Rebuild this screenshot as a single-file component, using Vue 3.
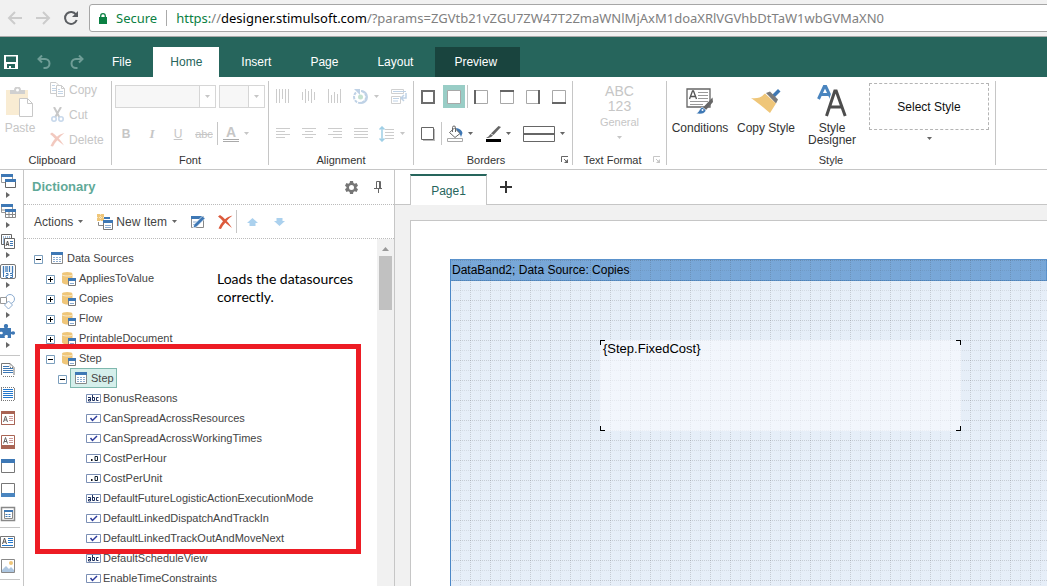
<script setup>
import { ref } from 'vue'

const tabs = ['File', 'Home', 'Insert', 'Page', 'Layout', 'Preview']
const activeTab = ref('Home')

const clipboard = [
  { icon: 'copy', label: 'Copy' },
  { icon: 'cut', label: 'Cut' },
  { icon: 'cross', label: 'Delete' }
]
const alignTop = ['valign-top', 'valign-mid', 'valign-bottom']
const alignBottom = ['left', 'center', 'right', 'justify']
const edges = ['edge-left', 'edge-top', 'edge-right', 'edge-bottom']

const bandGroups = ['windows', 'tables', 'report', 'barcode', 'shapes', 'puzzle']
const bandTools = ['page-header', 'page-body', 'title-top', 'title-bottom', 'band-top', 'band-bottom', 'data-band']
const componentTools = ['text', 'image']

const tree = [
  { level: 0, icon: 'table', label: 'Data Sources', toggle: 'minus' },
  { level: 1, icon: 'database', label: 'AppliesToValue', toggle: 'plus' },
  { level: 1, icon: 'database', label: 'Copies', toggle: 'plus' },
  { level: 1, icon: 'database', label: 'Flow', toggle: 'plus' },
  { level: 1, icon: 'database', label: 'PrintableDocument', toggle: 'plus' },
  { level: 1, icon: 'database', label: 'Step', toggle: 'minus' },
  { level: 2, icon: 'table', label: 'Step', toggle: 'minus', selected: true },
  { level: 3, icon: 'string', label: 'BonusReasons' },
  { level: 3, icon: 'bool', label: 'CanSpreadAcrossResources' },
  { level: 3, icon: 'bool', label: 'CanSpreadAcrossWorkingTimes' },
  { level: 3, icon: 'number', label: 'CostPerHour' },
  { level: 3, icon: 'number', label: 'CostPerUnit' },
  { level: 3, icon: 'string', label: 'DefaultFutureLogisticActionExecutionMode' },
  { level: 3, icon: 'bool', label: 'DefaultLinkedDispatchAndTrackIn' },
  { level: 3, icon: 'bool', label: 'DefaultLinkedTrackOutAndMoveNext' },
  { level: 3, icon: 'string', label: 'DefaultScheduleView' },
  { level: 3, icon: 'bool', label: 'EnableTimeConstraints' }
]
</script>

<template>
  <svg class="sprite" aria-hidden="true">
    <defs>
      <symbol id="caret" viewBox="0 0 5 3"><path d="M0 0h5L2.500 3z" fill="currentColor" /></symbol>
      <symbol id="caret-right" viewBox="0 0 4 6"><path d="M0 0l4 3-4 3z" fill="#666" /></symbol>
      <symbol id="launcher" viewBox="0 0 8 8">
        <path d="M.5 6V.5H7M3 3l3 3" fill="none" stroke="currentColor" /><path d="M7 3v4H3z" fill="currentColor" />
      </symbol>

      <symbol id="nav-back" viewBox="0 0 16 16"><path d="M15 8H2M8 2L2 8l6 6" fill="none" stroke="#ccc" stroke-width="2" /></symbol>
      <symbol id="nav-forward" viewBox="0 0 16 16"><path d="M1 8h13M8 2l6 6-6 6" fill="none" stroke="#ccc" stroke-width="2" /></symbol>
      <symbol id="reload" viewBox="0 0 16 16">
        <path d="M13 4.500A6 6 0 1 0 13.700 10" fill="none" stroke="#5a5d61" stroke-width="2" /><path d="M15 1v6H9z" fill="#5a5d61" />
      </symbol>
      <symbol id="lock" viewBox="0 0 8 11">
        <rect y="4" width="8" height="7" fill="#0b8043" /><path d="M1.700 5V3a2.300 2.300 0 0 1 4.600 0v2" fill="none" stroke="#0b8043" stroke-width="1.300" />
      </symbol>

      <symbol id="save" viewBox="0 0 14 14">
        <path d="M0 0h14v14H0zM2 1.500V7h10V1.500zM3 9v4h2v-2h2v2h4V9z" fill="#fff" fill-rule="evenodd" />
      </symbol>
      <symbol id="undo" viewBox="0 0 14 14">
        <path d="M5 .5L1.500 4 5 7.500M2 4h6a4.500 4.500 0 0 1 0 9H6.500" fill="none" stroke="#6f9d96" stroke-width="2" />
      </symbol>
      <symbol id="redo" viewBox="0 0 14 14">
        <path d="M9 .5L12.500 4 9 7.500M12 4H6a4.500 4.500 0 0 0 0 9h1.500" fill="none" stroke="#6f9d96" stroke-width="2" />
      </symbol>

      <symbol id="paste" viewBox="0 0 28 30">
        <path d="M0 3h22v25H0z" fill="#f9ecd3" />
        <path d="M4 7V3h4a3.500 3.500 0 0 1 7 0h4v4z" fill="#d0d0d0" /><circle cx="11.500" cy="3" r="1.500" fill="#fff" />
        <path d="M13.500 11.500h8l5 5v13h-13z" fill="#fff" stroke="#c8c8c8" /><path d="M21.500 11.500v5h5" fill="none" stroke="#c8c8c8" />
      </symbol>
      <symbol id="copy" viewBox="0 0 15 15">
        <path d="M.5.5H6L9.500 4v7.500h-9z" fill="#fff" stroke="#ccc" /><path d="M2 3.500h3M2 6.500h4M2 8.500h4" stroke="#c3d4e6" />
        <path d="M6.500 3.500h5l3 3v8h-8z" fill="#fff" stroke="#ccc" /><path d="M11.500 3.500v3h3" fill="none" stroke="#ccc" />
        <path d="M8 7.500h2M8 9.500h5M8 11.500h5" stroke="#c3d4e6" />
      </symbol>
      <symbol id="cut" viewBox="0 0 15 15">
        <path d="M4 0L9.500 10.500M11 0L5 10.500" stroke="#c8c8c8" stroke-width="2" />
        <circle cx="4" cy="12" r="2.200" fill="none" stroke="#c7d8eb" stroke-width="1.600" />
        <circle cx="11" cy="12" r="2.200" fill="none" stroke="#c7d8eb" stroke-width="1.600" />
      </symbol>
      <symbol id="cross" viewBox="0 0 15 14">
        <path d="M0 1.500L2 0c2 1.300 3.600 2.700 5 4.200C9 2.500 11 1.300 14.500.5 12 2.500 10 4.200 8.700 6c2 2.200 3.500 4 5.300 7-2.500-2-4.700-3.600-6.700-5.200C5.500 9.800 4 12 3 14l-2.500-.5C1.500 11 3 8.500 5 6.200 3.500 4.600 2 3 0 1.500z" fill="currentColor" />
      </symbol>

      <symbol id="valign-top" viewBox="0 0 14 15"><path d="M.5 0v14M3.500 0v14M6.500 0v10M9.500 0v14M12.500 0v14" stroke="#ccc" /></symbol>
      <symbol id="valign-mid" viewBox="0 0 14 15"><path d="M.5 3v8M3.500 0v14M6.500 2v10M9.500 0v14M12.500 3v8" stroke="#ccc" /></symbol>
      <symbol id="valign-bottom" viewBox="0 0 14 15"><path d="M.5 0v14M3.500 6v8M6.500 3v11M9.500 5v9M12.500 0v14" stroke="#ccc" /></symbol>
      <symbol id="rotate" viewBox="0 0 15 15">
        <path d="M3 3.500A6 6 0 1 0 8 2" fill="none" stroke="#bfd2e6" stroke-width="2" stroke-dasharray="3 1" />
        <path d="M8 2a6 6 0 0 1 0 12" fill="none" stroke="#bfd2e6" stroke-width="2" />
        <path d="M1 0h6v6z" fill="#bfd2e6" /><circle cx="7.500" cy="8" r="2.500" fill="#c5e2d0" />
      </symbol>
      <symbol id="wrap" viewBox="0 0 16 15">
        <path d="M.5.5h12v4H.5zM.5 7.500h9v7H.5z" fill="none" stroke="#d0d0d0" /><path d="M2 2.500h13M2 9.500h6M2 12h5" stroke="#bfd2e6" />
        <path d="M15 4v5h-4m2-3l-3 3 3 3" fill="none" stroke="#bfd2e6" stroke-width="1.500" />
      </symbol>
      <symbol id="left" viewBox="0 0 14 11"><path d="M0 .5h14M0 3.500h9M0 6.500h14M0 9.500h9" stroke="#ccc" /></symbol>
      <symbol id="center" viewBox="0 0 14 11"><path d="M0 .5h14M3 3.500h8M0 6.500h14M3 9.500h8" stroke="#ccc" /></symbol>
      <symbol id="right" viewBox="0 0 14 11"><path d="M0 .5h14M5 3.500h9M0 6.500h14M5 9.500h9" stroke="#ccc" /></symbol>
      <symbol id="justify" viewBox="0 0 14 11"><path d="M0 .5h14M0 3.500h14M0 6.500h14M0 9.500h14" stroke="#ccc" /></symbol>
      <symbol id="line-height" viewBox="0 0 15 16">
        <path d="M3 1v14M.5 3.500L3 1l2.500 2.500M.5 12.500L3 15l2.500-2.500" fill="none" stroke="#9fcfe6" stroke-width="1.500" />
        <path d="M6 3.500h9M6 6.500h9M6 9.500h9M6 12.500h9" stroke="#ccc" />
      </symbol>

      <symbol id="border-all" viewBox="0 0 14 14"><path d="M1 1h12v12H1z" fill="#fff" stroke="#6d6d6d" stroke-width="2" /></symbol>
      <symbol id="border-none" viewBox="0 0 14 14"><path d="M.5.5h13v13H.5z" fill="#fff" stroke="#a8a8a8" /></symbol>
      <symbol id="edge-left" viewBox="0 0 14 14"><path d="M.5.5h13v13H.5z" fill="#fff" stroke="#a8a8a8" /><path d="M1 0v14" stroke="#666" stroke-width="2" /></symbol>
      <symbol id="edge-top" viewBox="0 0 14 14"><path d="M.5.5h13v13H.5z" fill="#fff" stroke="#a8a8a8" /><path d="M0 1h14" stroke="#666" stroke-width="2" /></symbol>
      <symbol id="edge-right" viewBox="0 0 14 14"><path d="M.5.5h13v13H.5z" fill="#fff" stroke="#a8a8a8" /><path d="M13 0v14" stroke="#666" stroke-width="2" /></symbol>
      <symbol id="edge-bottom" viewBox="0 0 14 14"><path d="M.5.5h13v13H.5z" fill="#fff" stroke="#a8a8a8" /><path d="M0 13h14" stroke="#666" stroke-width="2" /></symbol>
      <symbol id="shadow" viewBox="0 0 14 14"><path d="M2 2h12v12H2z" fill="#bbb" /><path d="M.5.5h12v12H.5z" fill="#fff" stroke="#666" /></symbol>
      <symbol id="bucket" viewBox="0 0 17 17">
        <path d="M9 3c3 .5 6 2 6.500 5L14 12c-1-3-2-4-4-5z" fill="#3e78b5" />
        <path d="M7.500 3L13 8.500l-5 4-5.500-5z" fill="#fff" stroke="#666" /><path d="M5.500 7V2.500a1.500 1.500 0 0 1 3 0V7" fill="none" stroke="#666" />
        <path d="M.5 13.500h15v3H.5z" fill="#fff" stroke="#a8a8a8" />
      </symbol>
      <symbol id="pen" viewBox="0 0 17 16">
        <path d="M13.500 0L16 1 8.500 9 6 7.500z" fill="#666" /><path d="M5.500 8L8 9.500C6 11.500 4 12 1 12c2-1 3-2 4.500-4z" fill="#666" /><path d="M1 13h15v3H1z" fill="#000" />
      </symbol>
      <symbol id="line-style" viewBox="0 0 32 16"><path d="M.5.5h31v15H.5z" fill="#fff" stroke="#666" /><path d="M0 8h32" stroke="#666" stroke-width="2" /></symbol>

      <symbol id="conditions" viewBox="0 0 28 28">
        <path d="M1 2h23v18H1z" fill="#fff" stroke="#666" stroke-width="1.300" />
        <path d="M3.500 12L6.500 4h1l3 8M5 9.500h4" fill="none" stroke="#555" stroke-width="1.300" />
        <path d="M12 5.500h10M12 8.500h10M12 11.500h10M4 14.500h18M4 17.500h13" stroke="#999" />
        <path d="M26.500 10.500L27 15l-7 8-3-2.500z" fill="#666" /><path d="M16 20l4 3c-1 4-5 4.500-10 3.500 3-1 3-4 6-6.500z" fill="#3e78b5" stroke="#fff" stroke-width=".5" />
        <circle cx="16.500" cy="23" r="1" fill="#fff" />
      </symbol>
      <symbol id="broom" viewBox="0 0 30 26">
        <path d="M21 7l6-6 2.500 2.500-6 6z" fill="#3e78b5" /><path d="M15 5l4-1.500 8 8-2 4z" fill="#7b7b7b" />
        <path d="M14 5.500l11 10L19 25C13 20 6 14 0 10c6 1 10-.5 14-4.500z" fill="#efc679" />
      </symbol>
      <symbol id="style-designer" viewBox="0 0 30 32">
        <path d="M1.500 14L7.500 1h1l6 13M4 9.500h8" fill="none" stroke="#4a85bf" stroke-width="3" />
        <path d="M9.500 31L17.500 6h2l9 25M12.500 22h13" fill="none" stroke="#fff" stroke-width="5" />
        <path d="M9.500 31L17.800 6h1.400l9 25M12.500 22h12.500" fill="none" stroke="#4d4d4d" stroke-width="3" />
      </symbol>

      <symbol id="windows" viewBox="-1 0 16 16">
        <path d="M.5.500h11v8H.5z" fill="#fff" stroke="#999" /><path d="M0 0h12v3H0z" fill="#3e78b5" />
        <path d="M4.500 5.500h10v8h-10z" fill="#fff" stroke="#666" /><path d="M4 5h11v3H4z" fill="#3e78b5" />
      </symbol>
      <symbol id="tables" viewBox="-1 0 16 16">
        <path d="M.5.500h11v8H.5z" fill="#fff" stroke="#999" /><path d="M0 0h12v3H0z" fill="#3e78b5" />
        <path d="M4.500 5.500h10v8h-10zM4 10.500h10M8 8v6M11.500 8v6M0 6h4" fill="#fff" stroke="#888" /><path d="M4 5h11v3H4z" fill="#3e78b5" />
      </symbol>
      <symbol id="report" viewBox="0 0 16 16">
        <path d="M1.500.500h10v10h-10z" fill="#fff" stroke="#666" /><path d="M3 3h7M3 5h7M3 7h7M3 9h7" stroke="#3e78b5" stroke-dasharray="1 1" />
        <path d="M4.500 4.500h10v10h-10z" fill="#fff" stroke="#666" /><path d="M6 12l1.500-5L9 12M6.500 10.500h2" fill="none" stroke="#555" />
        <path d="M10 7.500h3M10 9.500h3M10 11.500h3" stroke="#3e78b5" />
      </symbol>
      <symbol id="barcode" viewBox="0 0 16 16">
        <rect x=".5" y=".500" width="15" height="14" rx="1.500" fill="#fff" stroke="#777" />
        <path d="M3.500 2v7M6 2v6M9.500 2v6M12.500 2v7" stroke="#3e78b5" stroke-width="1.300" /><path d="M7.500 2v6" stroke="#3e78b5" stroke-width=".7" />
        <path d="M3.500 9v4M6 9.500h2v2H6v2h2M10 9.500h2.500v2H10.500h2v2H10" fill="none" stroke="#3e78b5" />
      </symbol>
      <symbol id="shapes" viewBox="0 0 16 16">
        <circle cx="10" cy="5" r="4.500" fill="#fff" stroke="#8cacd0" /><path d="M.5 3.500h6v6h-6z" fill="#fff" stroke="#999" /><path d="M8.500 7l4 4-4 4-4-4z" fill="#fff" stroke="#8cacd0" />
      </symbol>
      <symbol id="puzzle" viewBox="0 0 16 16">
        <path d="M0 4h4.500C3 1.500 4.500 0 6 0s3 1.500 1.500 4H11v4c2.500-1.500 4-.5 4 1s-1.500 2.500-4 1v4H7.500c1-2.500 0-3-1.300-3S4 12 5 14H0v-4c2 .8 2.800 0 2.800-1S2 7.200 0 8z" fill="#3e78b5" />
      </symbol>
      <symbol id="page-header" viewBox="0 0 16 16">
        <path d="M1.500 13V1.500H10l4 4V13" fill="#fff" stroke="#777" /><path d="M10 1.500v4h4M3 14.500h12" fill="none" stroke="#777" stroke-dasharray="1 1" />
        <path d="M3 4.500h6M3 6.500h10M3 8.500h10M3 10.500h10" stroke="#3e78b5" />
      </symbol>
      <symbol id="page-body" viewBox="0 0 16 16">
        <path d="M1.500 2v12M14.500 2v12" stroke="#888" /><path d="M1 1.500h14M1 14.500h14" stroke="#777" stroke-dasharray="1 1" />
        <path d="M3 3h10v1H3zM3 5h10v1H3zM3 7h10v1H3zM3 9h10v1H3zM3 11h10v1H3z" fill="#2277cc" />
      </symbol>
      <symbol id="title-top" viewBox="0 0 16 16">
        <path d="M1.500 1.500h13v13h-13z" fill="#fff" stroke="#777" /><path d="M1 1h14v3H1z" fill="#a96454" />
        <path d="M1.500 2v12.500h13V2" fill="none" stroke="#a96454" /><path d="M3.500 12l2-6 2 6M4 10h3" fill="none" stroke="#666" /><path d="M9 6.500h4M9 8.500h4M9 10.500h4" stroke="#c99" />
      </symbol>
      <symbol id="title-bottom" viewBox="0 0 16 16">
        <path d="M1.500 1.500h13v13h-13z" fill="#fff" stroke="#a96454" /><path d="M1 11h14v4H1z" fill="#a96454" />
        <path d="M3.500 9.500l2-6 2 6M4 7.500h3" fill="none" stroke="#666" /><path d="M9 4.500h4M9 6.500h4M9 8.500h4" stroke="#c99" />
      </symbol>
      <symbol id="band-top" viewBox="0 0 16 16"><path d="M1.500 1.500h13v13h-13z" fill="#fff" stroke="#777" /><path d="M1 1h14v4H1z" fill="#3e78b5" /></symbol>
      <symbol id="band-bottom" viewBox="0 0 16 16"><path d="M1.500 1.500h13v13h-13z" fill="#fff" stroke="#777" /><path d="M1 11h14v4H1z" fill="#4a85bf" /></symbol>
      <symbol id="data-band" viewBox="0 0 16 16">
        <path d="M1.500 1.500h13v13h-13z" fill="#fff" stroke="#888" stroke-width="1.500" /><path d="M4.500 4.500h8v8h-8z" fill="#fff" stroke="#888" /><path d="M4 4h9v2H4z" fill="#3e78b5" />
        <path d="M5.500 8.500h6M5.500 10.500h6" stroke="#3e78b5" stroke-dasharray="2 1" />
      </symbol>
      <symbol id="text" viewBox="0 0 16 16">
        <path d="M.5 2.500h14v11H.5z" fill="#fff" stroke="#777" /><path d="M2.500 10l2-6 2 6M3 8h3" fill="none" stroke="#555" />
        <path d="M8 4h5v1H8zM8 6h5v1H8zM8 8h5v1H8zM2 11h11v1H2z" fill="#2277cc" />
      </symbol>
      <symbol id="image" viewBox="0 0 16 16">
        <path d="M1.500 1.500h13v13h-13z" fill="#fff" stroke="#888" /><circle cx="11" cy="5" r="2" fill="#efc679" /><path d="M2 14v-2l4-4 3 3 2-2 3 3v2z" fill="#adc6e0" />
      </symbol>

      <symbol id="gear" viewBox="0 0 13 13">
        <path d="M5 0h3l.4 2 1.300.7 1.900-.7L13 4.700 11.500 6v1L13 8.300 11.600 11l-1.900-.7-1.300.7L8 13H5l-.4-2-1.300-.7-1.900.7L0 8.300 1.500 7V6L0 4.700 1.400 2l1.900.7L4.600 2zM6.500 4a2.500 2.500 0 1 0 0 5 2.500 2.500 0 0 0 0-5z" fill="#767676" fill-rule="evenodd" />
      </symbol>
      <symbol id="pin" viewBox="0 0 9 12"><path d="M2.500 7V.5h4V7M5.500 0v7M0 7.500h8M4.500 8v4" fill="none" stroke="#666" /></symbol>
      <symbol id="new-item" viewBox="0 0 16 16">
        <path d="M0 0h7v7H0z" fill="#efc679" /><path d="M0 3.500h7M3.500 0v7" stroke="#f8e6c2" stroke-dasharray="1 1" />
        <path d="M1.500 8v3.500H6M8 4.500h4" stroke="#888" fill="none" /><path d="M6.500 7.500h9v8h-9z" fill="#fff" stroke="#777" /><path d="M6 6h10v3H6zM7 3h6v2H7z" fill="#3e78b5" /><path d="M8 11.500h6M8 13.500h6" stroke="#8cacd0" />
      </symbol>
      <symbol id="edit" viewBox="0 0 16 16">
        <path d="M1.500 2.500h12v11h-12z" fill="#fff" stroke="#888" /><path d="M1 2h11v3H1z" fill="#3e78b5" /><path d="M3 8h4M3 10.500h3" stroke="#8cacd0" />
        <path d="M12.500 2L15 4.500 6.500 13 3 14l1-3.500z" fill="#3e78b5" stroke="#fff" stroke-width=".7" />
      </symbol>
      <symbol id="move-up" viewBox="0 0 11 8"><path d="M5.500 0L11 5H8.500v3h-6V5H0z" fill="#abd1ee" /></symbol>
      <symbol id="move-down" viewBox="0 0 11 8"><path d="M5.500 8L11 3H8.500V0h-6v3H0z" fill="#abd1ee" /></symbol>

      <symbol id="minus" viewBox="0 0 9 9"><path d="M.5.5h8v8h-8z" fill="#fff" stroke="#7b9ebd" /><path d="M2 4.500h5" stroke="#000" /></symbol>
      <symbol id="plus" viewBox="0 0 9 9"><path d="M.5.5h8v8h-8z" fill="#fff" stroke="#7b9ebd" /><path d="M2 4.500h5M4.500 2v5" stroke="#000" /></symbol>
      <symbol id="table" viewBox="0 0 12 12">
        <path d="M.5.5h11v11H.5z" fill="#fff" stroke="#888" /><path d="M0 0h12v3H0z" fill="#3e78b5" /><path d="M2 5.500h8M2 7.500h8M2 9.500h8" stroke="#8cacd0" stroke-dasharray="2 1" />
      </symbol>
      <symbol id="database" viewBox="0 0 14 14">
        <path d="M0 2v8.500C1 12 3 12.500 6 12.500V6h4.500V2z" fill="#efc679" /><ellipse cx="5.200" cy="1.700" rx="5.200" ry="1.700" fill="#efc679" />
        <path d="M0 2.700c1 1.700 9.500 1.700 10.500 0" fill="none" stroke="#fff" stroke-width=".6" />
        <path d="M6.500 6.500h7v7h-7z" fill="#fff" stroke="#777" /><path d="M6 6h8v3H6z" fill="#3e78b5" /><path d="M8 11.500h4" stroke="#8cacd0" />
      </symbol>
      <symbol id="string" viewBox="0 0 15 9">
        <path d="M.5.5h14v8H.5z" fill="#fff" stroke="#7b8fb5" />
        <path d="M2 3.500h2.500V7M4.500 5.500h-2V7h2M6.500 1v5.500h2v-3h-2M12.500 3.500h-2v3h2" fill="none" stroke="#1d2f5c" />
      </symbol>
      <symbol id="bool" viewBox="0 0 15 9"><path d="M.5.5h14v8H.5z" fill="#fff" stroke="#7b8fb5" /><path d="M4.500 4l2 2.500L11 2" fill="none" stroke="#2b3a9b" stroke-width="1.500" /></symbol>
      <symbol id="number" viewBox="0 0 15 9">
        <path d="M.5.500h14v8H.5z" fill="#fff" stroke="#7b8fb5" /><path d="M5 5h1.500v2H5z" fill="#111" /><path d="M9 2.500h2.500v4H9z" fill="none" stroke="#123" />
      </symbol>
    </defs>
  </svg>

  <div class="app">
    <header class="browser">
      <button class="nav" aria-label="Back"><svg width="16" height="16"><use href="#nav-back" /></svg></button>
      <button class="nav" aria-label="Forward"><svg width="16" height="16"><use href="#nav-forward" /></svg></button>
      <button class="nav" aria-label="Reload"><svg width="16" height="16"><use href="#reload" /></svg></button>
      <div class="address">
        <svg width="8" height="11"><use href="#lock" /></svg>
        <span class="secure">Secure</span>
        <a class="url" href="#"><span class="scheme">https:</span>//<span class="host">designer.stimulsoft.com</span>/?params=ZGVtb21vZGU7ZW47T2ZmaWNlMjAxM1doaXRlVGVhbDtTaW1wbGVMaXN0</a>
      </div>
    </header>

    <nav class="menu">
      <div class="quick">
        <button aria-label="Save"><svg width="14" height="14"><use href="#save" /></svg></button>
        <button aria-label="Undo"><svg width="14" height="14"><use href="#undo" /></svg></button>
        <button aria-label="Redo"><svg width="14" height="14"><use href="#redo" /></svg></button>
      </div>
      <button v-for="t in tabs" :key="t" class="tab" :class="{ active: t === activeTab, preview: t === 'Preview' }" @click="activeTab = t">{{ t }}</button>
    </nav>

    <div class="ribbon">
      <section class="group clipboard">
        <div class="content">
          <button class="paste" disabled><svg width="28" height="30"><use href="#paste" /></svg>Paste</button>
          <div class="stack">
            <button v-for="c in clipboard" :key="c.label" disabled>
              <svg :class="{ 'dim-cross': c.icon === 'cross' }" width="15" height="15"><use :href="'#' + c.icon" /></svg>{{ c.label }}
            </button>
          </div>
        </div>
        <h2>Clipboard</h2>
      </section>

      <section class="group font">
        <div class="content rows">
          <div class="row combos">
            <label class="combo family"><select disabled aria-label="Font family"></select><span><svg width="5" height="3"><use href="#caret" /></svg></span></label>
            <label class="combo size"><select disabled aria-label="Font size"></select><span><svg width="5" height="3"><use href="#caret" /></svg></span></label>
          </div>
          <div class="row letters">
            <button class="tool" disabled><b>B</b></button>
            <button class="tool serif" disabled><i>I</i></button>
            <button class="tool" disabled><u>U</u></button>
            <button class="tool strike" disabled><s>abc</s></button>
            <span class="rule"></span>
            <button class="color" disabled aria-label="Text color"><span>A</span><svg width="5" height="3"><use href="#caret" /></svg></button>
          </div>
        </div>
        <h2>Font</h2>
      </section>

      <section class="group alignment">
        <div class="content rows">
          <div class="row">
            <button v-for="a in alignTop" :key="a" class="tool" disabled :aria-label="a"><svg width="14" height="15"><use :href="'#' + a" /></svg></button>
            <button class="tool drop" disabled aria-label="Rotate"><svg width="15" height="15"><use href="#rotate" /></svg><svg width="5" height="3"><use href="#caret" /></svg></button>
            <button class="tool" disabled aria-label="Word wrap"><svg width="16" height="15"><use href="#wrap" /></svg></button>
          </div>
          <div class="row">
            <button v-for="a in alignBottom" :key="a" class="tool" disabled :aria-label="a"><svg width="14" height="11"><use :href="'#' + a" /></svg></button>
            <button class="tool drop" disabled aria-label="Line spacing"><svg width="15" height="16"><use href="#line-height" /></svg><svg width="5" height="3"><use href="#caret" /></svg></button>
          </div>
        </div>
        <h2>Alignment</h2>
      </section>

      <section class="group borders">
        <div class="content rows">
          <div class="row">
            <button class="tool" aria-label="All borders"><svg width="14" height="14"><use href="#border-all" /></svg></button>
            <button class="tool" aria-label="No border"><span class="pressed"><svg width="14" height="14"><use href="#border-none" /></svg></span></button>
            <span class="rule"></span>
            <button v-for="e in edges" :key="e" class="tool" :aria-label="e"><svg width="14" height="14"><use :href="'#' + e" /></svg></button>
          </div>
          <div class="row">
            <button class="tool" aria-label="Shadow"><svg width="14" height="14"><use href="#shadow" /></svg></button>
            <span class="rule"></span>
            <button class="tool drop" aria-label="Fill"><svg width="17" height="17"><use href="#bucket" /></svg><svg width="5" height="3"><use href="#caret" /></svg></button>
            <button class="tool drop" aria-label="Border color"><svg width="17" height="16"><use href="#pen" /></svg><svg width="5" height="3"><use href="#caret" /></svg></button>
            <button class="tool drop line" aria-label="Border style"><svg width="32" height="16"><use href="#line-style" /></svg><svg width="5" height="3"><use href="#caret" /></svg></button>
          </div>
        </div>
        <h2>Borders</h2>
        <button class="launcher" aria-label="Border settings"><svg width="8" height="8"><use href="#launcher" /></svg></button>
      </section>

      <section class="group format">
        <button class="content general" disabled><span class="sample">ABC<br>123</span>General<svg width="5" height="3"><use href="#caret" /></svg></button>
        <h2>Text Format</h2>
        <button class="launcher" disabled aria-label="Format settings"><svg width="8" height="8"><use href="#launcher" /></svg></button>
      </section>

      <section class="group style">
        <div class="content">
          <button class="big"><svg width="28" height="28"><use href="#conditions" /></svg>Conditions</button>
          <button class="big"><svg width="30" height="26"><use href="#broom" /></svg>Copy Style</button>
          <button class="big"><svg width="30" height="32"><use href="#style-designer" /></svg>Style Designer</button>
          <button class="picker"><span>Select Style</span><svg width="5" height="3"><use href="#caret" /></svg></button>
        </div>
        <h2>Style</h2>
      </section>
    </div>

    <main class="workspace">
      <aside class="toolbox">
        <button v-for="g in bandGroups" :key="g" class="fly" :aria-label="g"><svg width="16" height="16"><use :href="'#' + g" /></svg><svg width="4" height="6"><use href="#caret-right" /></svg></button>
        <hr>
        <button v-for="b in bandTools" :key="b" class="single" :aria-label="b"><svg width="16" height="16"><use :href="'#' + b" /></svg></button>
        <hr>
        <button v-for="c in componentTools" :key="c" class="single" :aria-label="c"><svg width="16" height="16"><use :href="'#' + c" /></svg></button>
        <hr>
      </aside>

      <section class="dictionary">
        <div class="title">
          <h1>Dictionary</h1>
          <button aria-label="Settings"><svg width="13" height="13"><use href="#gear" /></svg></button>
          <button aria-label="Pin"><svg width="9" height="12"><use href="#pin" /></svg></button>
        </div>
        <div class="actions">
          <button class="menu-button">Actions<svg class="caret" width="5" height="3"><use href="#caret" /></svg></button>
          <button class="menu-button new"><svg width="16" height="16"><use href="#new-item" /></svg>New Item<svg class="caret" width="5" height="3"><use href="#caret" /></svg></button>
          <button aria-label="Edit"><svg width="16" height="16"><use href="#edit" /></svg></button>
          <button class="remove" aria-label="Delete"><svg width="15" height="14"><use href="#cross" /></svg></button>
          <span class="rule"></span>
          <button aria-label="Move up"><svg width="11" height="8"><use href="#move-up" /></svg></button>
          <button aria-label="Move down"><svg width="11" height="8"><use href="#move-down" /></svg></button>
        </div>
        <div class="browse">
          <ul class="tree">
            <li v-for="(n, i) in tree" :key="i" :class="'level-' + n.level">
              <button v-if="n.toggle" class="toggle" :aria-label="n.toggle"><svg width="9" height="9"><use :href="'#' + n.toggle" /></svg></button>
              <span class="node" :class="{ selected: n.selected }">
                <svg v-if="n.icon === 'table'" width="12" height="12"><use href="#table" /></svg>
                <svg v-else-if="n.icon === 'database'" class="db" width="14" height="14"><use href="#database" /></svg>
                <svg v-else width="15" height="9"><use :href="'#' + n.icon" /></svg>
                {{ n.label }}
              </span>
            </li>
          </ul>
          <div class="scrollbar"><svg width="7" height="4" viewBox="0 0 7 4"><path d="M0 4L3.500 0 7 4z" fill="#999" /></svg><div class="thumb"></div></div>
          <p class="note">Loads the datasources correctly.</p>
          <div class="highlight"></div>
        </div>
      </section>

      <section class="designer">
        <div class="pages">
          <button class="page-tab">Page1</button>
          <button class="add" aria-label="Add page"><svg width="12" height="12" viewBox="0 0 12 12"><path d="M6 0v12M0 6h12" stroke="#333" stroke-width="2" /></svg></button>
        </div>
        <div class="surface">
          <div class="page">
            <div class="band">
              <div class="band-title">DataBand2; Data Source: Copies</div>
              <svg class="grid" width="100%" height="100%">
                <defs>
                  <pattern id="dots" x="-1" y="1" width="20" height="20" patternUnits="userSpaceOnUse">
                    <path d="M0 .5h20M.5 0v20" stroke="#444" stroke-opacity=".2" stroke-dasharray="1 1" />
                    <path d="M0 10.500h20M10.500 0v20" stroke="#444" stroke-opacity=".11" stroke-dasharray="1 1" />
                  </pattern>
                </defs>
                <rect width="100%" height="100%" fill="url(#dots)" />
              </svg>
              <div class="field">{Step.FixedCost}<i></i><i></i><i></i><i></i></div>
            </div>
          </div>
        </div>
      </section>
    </main>
  </div>
</template>

<style>
body { overflow: hidden; }
</style>

<style scoped>
* { box-sizing: border-box; }
.sprite { position: absolute; width: 0; height: 0; }
.app { display: flex; flex-direction: column; height: 100vh; font: 12px/14px "Liberation Sans", Arial, sans-serif; color: #333; background: #fff; }
button { display: flex; align-items: center; justify-content: center; padding: 0; border: 0; background: none; font: inherit; color: inherit; }
svg { flex: none; display: block; }
h1, h2, p, ul { margin: 0; padding: 0; }
.rule { flex: none; width: 1px; height: 23px; background: #c6c6c6; }

.browser { flex: none; display: flex; align-items: center; height: 37px; padding-left: 7px; background: #f1f1f1; border-bottom: 1px solid #a9a9a9; }
.nav { width: 16px; margin-right: 12px; }
.nav:nth-child(3) { margin-right: 10px; }
.address { flex: 1; display: flex; align-items: center; height: 28px; margin-right: -4px; padding-left: 9px; background: #fff; border: 1px solid #a6a6a6; border-radius: 3px; font: 13px/20px "Noto Sans", sans-serif; white-space: nowrap; }
.secure { margin-left: 9px; padding-right: 9px; border-right: 1px solid #aaa; color: #0b8043; line-height: 16px; }
.url { margin-left: 9px; color: #808080; text-decoration: none; }
.scheme { color: #0b8043; }
.host { color: #000; }

.menu { flex: none; display: flex; align-items: flex-end; height: 40px; background: #26655c; color: #fff; }
.quick { display: flex; align-items: center; gap: 19px; height: 30px; padding: 0 9px 0 4px; }
.tab { height: 30px; padding: 0 20px 0 19px; }
.tab.active { margin: 0 3px 0 2px; padding: 0 17px; background: #fff; color: #26655c; }
.tab.preview { margin-left: 2px; padding-right: 23px; background: #19443e; color: #fff; }

.ribbon { flex: none; display: flex; height: 93px; padding: 4px 0; border-bottom: 1px solid #c6c6c6; }
.group { position: relative; display: flex; flex-direction: column; border-right: 1px solid #c6c6c6; }
.group h2 { flex: none; font-size: 11px; font-weight: normal; line-height: 14px; text-align: center; }
.content { flex: none; display: flex; height: 72px; }
.rows { flex-direction: column; }
.row { display: flex; align-items: center; height: 37px; margin-top: -3px; }
.row + .row { margin-top: 0; }
button:disabled { color: #c6c6c6; }
.tool { width: 26px; height: 23px; }
.drop { justify-content: space-between; width: 38px; padding: 0 7px 0 5px; }
.launcher { position: absolute; right: 3px; bottom: 1px; color: #666; }

.clipboard { width: 112px; }
.clipboard h2 { padding-right: 7px; }
.paste { flex-direction: column; justify-content: flex-start; gap: 4px; width: 40px; padding-top: 6px; }
.stack { display: flex; flex-direction: column; margin-top: -4px; padding-left: 10px; }
.stack button { justify-content: flex-start; gap: 4px; height: 25px; }
.dim-cross { color: #f2c9bf; }
.font { width: 157px; }
.combos { gap: 3px; padding-left: 3px; }
.combo { display: flex; height: 23px; border: 1px solid #d6d6d6; color: #c6c6c6; }
.combo select { flex: 1; min-width: 0; appearance: none; border: 0; background: #f4f4f4; }
.combo span { display: flex; align-items: center; justify-content: center; width: 16px; border-left: 1px solid #d6d6d6; }
.family { width: 101px; }
.size { width: 46px; }
.letters { padding-left: 1px; }
.serif { font-family: "Liberation Serif", serif; font-size: 13px; font-weight: bold; }
.strike { font-size: 11px; }
.color { gap: 5px; padding-left: 5px; }
.color span { width: 16px; border-bottom: 3px double #aaa; font-weight: bold; font-size: 14px; line-height: 13px; }
.alignment { width: 145px; }
.alignment .row { padding-left: 1px; }
.borders { width: 159px; }
.borders h2 { padding-right: 14px; }
.borders .row { padding-left: 1px; }
.pressed { display: flex; align-items: center; justify-content: center; width: 22px; height: 23px; background: #99cdc6; }
.borders .drop { color: #666; }
.borders .drop.line { width: 52px; padding-right: 5px; }
.format { width: 94px; }
.format h2 { padding-right: 14px; }
.format .launcher { right: 5px; color: #c6c6c6; }
.general { flex-direction: column; justify-content: flex-start; font-size: 11px; line-height: 15px; }
.sample { padding: 3px 0 1px; font-size: 14px; }
.general svg { margin-top: 6px; }
.style { width: 329px; }
.style .content { padding-top: 2px; }
.big { flex-direction: column; justify-content: flex-start; width: 66px; line-height: 12px; }
.big svg { height: 32px; margin: 2px 0 5px; }
.picker { flex: 1; flex-direction: column; justify-content: flex-start; margin: 0 6px 0 4px; }
.picker span { display: flex; align-items: center; justify-content: center; width: 100%; height: 47px; border: 1px dashed #b4b4b4; color: #111; }
.picker svg { margin-top: 7px; color: #666; }

.workspace { flex: 1; display: flex; min-height: 0; overflow: hidden; }
.toolbox { flex: none; width: 24px; padding-top: 4px; border-right: 1px solid #c6c6c6; overflow: hidden; }
.fly { flex-direction: column; justify-content: flex-start; gap: 2px; width: 16px; height: 30px; }
.single { width: 16px; height: 24px; }
.toolbox hr { width: 20px; height: 1px; margin: 1px 0 2px; border: 0; background: #c6c6c6; }
.dictionary { flex: none; display: flex; flex-direction: column; width: 371px; border-right: 1px solid #c6c6c6; }
.title { flex: none; display: flex; align-items: center; height: 35px; padding: 0 11px 0 8px; border-bottom: 1px dotted #bbb; }
.title h1 { flex: 1; font-size: 13px; color: #5fa998; }
.title button { margin-left: 16px; }
.actions { flex: none; display: flex; align-items: center; height: 34px; padding-left: 10px; border-bottom: 1px dotted #bbb; color: #444; }
.caret { margin-left: 5px; color: #666; }
.menu-button.new { margin: 0 13px 0 14px; }
.menu-button.new svg:first-child { margin-right: 3px; }
.remove { margin: 0 3px 0 12px; color: #dc5a3c; }
.actions .rule + button { margin: 0 16px 0 10px; }
.browse { position: relative; flex: 1; display: flex; min-height: 0; }
.tree { flex: 1; padding: 9px 0 0 10px; overflow: hidden; list-style: none; font-size: 11px; color: #444; }
.tree li { display: flex; align-items: center; height: 20px; white-space: nowrap; }
.toggle { margin-right: 3px; padding-top: 2px; }
.node { display: flex; align-items: center; gap: 4px; height: 20px; padding: 0 4px; border: 1px solid transparent; }
.node .db { margin: 2px -1px 0 0; }
.level-1 { padding-left: 12px; }
.level-1 .node { padding-left: 3px; }
.level-2 { padding-left: 24px; }
.level-3 { padding-left: 51px; }
.level-3 .node { padding: 0; gap: 2px; }
.node.selected { background: #d5efeb; border-color: #7fb8ae; padding: 0 2px 0 4px; }
.scrollbar { display: flex; flex-direction: column; align-items: center; width: 17px; padding-top: 8px; background: #f1f1f1; }
.thumb { width: 13px; height: 54px; margin-top: 5px; background: #c1c1c1; }
.note { position: absolute; left: 193px; top: 31px; width: 150px; font: 14px/18px Lato, sans-serif; color: #000; }
.highlight { position: absolute; left: 11px; top: 105px; width: 326px; height: 210px; border: 5px solid #ed1c24; }

.designer { flex: 1; display: flex; flex-direction: column; min-width: 0; }
.pages { flex: none; display: flex; align-items: flex-end; height: 35px; padding-left: 15px; border-bottom: 1px solid #c6c6c6; }
.page-tab { width: 77px; height: 31px; margin-bottom: -1px; border: 1px solid #c6c6c6; border-top: 2px solid #26655c; border-bottom: 0; background: #fff; color: #26655c; }
.add { width: 38px; height: 34px; }
.surface { flex: 1; display: flex; padding: 15px 0 0 15px; background: #f1f1f1; overflow: hidden; }
.page { flex: 1; display: flex; padding: 38px 0 0 39px; border: 1px solid #c6c6c6; border-width: 1px 0 0 1px; background: #fff; }
.band { position: relative; flex: 1; border-left: 1px solid #4b87c7; background: #e6eef8; }
.grid { position: absolute; left: 0; top: 0; }
.band-title { height: 22px; padding-left: 1px; background: #78a7d8; border: 1px solid #5a92cc; border-left: 0; color: #000; line-height: 20px; }
.field { position: absolute; left: 149px; top: 81px; width: 361px; height: 91px; padding: 1px 3px; background: rgba(248, 250, 255, .62); color: #000; font-size: 13px; line-height: 16px; }
.field i { position: absolute; width: 5px; height: 5px; border: 0 solid #000; }
.field i:nth-child(1) { left: 0; top: 0; border-width: 1px 0 0 1px; }
.field i:nth-child(2) { right: 0; top: 0; border-width: 1px 1px 0 0; }
.field i:nth-child(3) { left: 0; bottom: 0; border-width: 0 0 1px 1px; }
.field i:nth-child(4) { right: 0; bottom: 0; border-width: 0 1px 1px 0; }
</style>
